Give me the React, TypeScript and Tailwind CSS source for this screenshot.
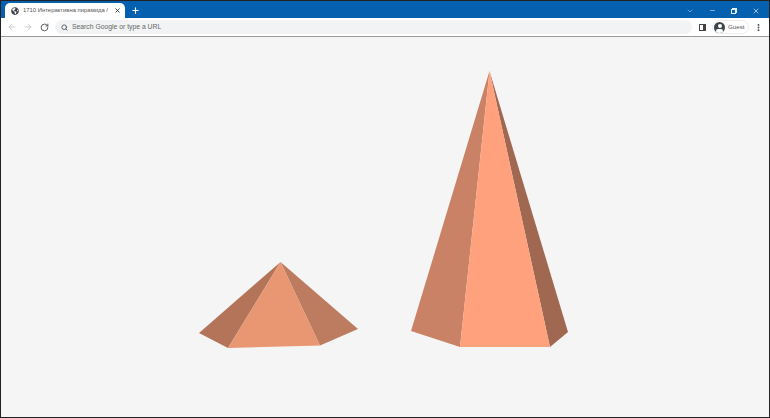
import { ArrowLeft, ArrowRight, ChevronDown, EllipsisVertical, Minus, Plus, RotateCw, Search, X } from "lucide-react";
import { FaGlobeAmericas } from "react-icons/fa";

function Pyramids() {
  return (
    <svg viewBox="0 0 768 380" className="w-full h-full block">
      <g transform="translate(-1 -37)">
        {/* left pyramid */}
        <polygon points="280.5,262 199,333 228,348" fill="#b3745a" />
        <polygon points="280.5,262 358,329 320,345.5" fill="#bd7c60" />
        <polygon points="280.5,262 228,348 320,345.5" fill="#e99672" />
        {/* right pyramid */}
        <polygon points="489.5,71 411,331 460,347" fill="#ca8266" />
        <polygon points="489.5,71 568,332 550,347" fill="#a06850" />
        <polygon points="489.5,71 460,347 550,347" fill="#ffa17c" />
      </g>
    </svg>
  );
}

function App() {
  return (
    <div className="w-[770px] h-[418px] border border-[#222] flex flex-col overflow-hidden font-['Liberation_Sans',sans-serif]">
      <div className="h-[17px] bg-[#0560b0] flex items-end pl-1 shrink-0">
        <div className="w-[120px] h-[15px] bg-white rounded-t-[5px] flex items-center pl-[6px] pr-[4px] gap-[4px]">
          <FaGlobeAmericas size={8} className="text-[#3c4043] shrink-0" />
          <span className="text-[5.9px] text-[#555] whitespace-nowrap flex-1">
            1710 Интерактивна пирамида /
          </span>
          <X size={7} className="text-[#333] shrink-0" strokeWidth={3} />
        </div>
        <div className="ml-[6px] h-[15px] flex items-center">
          <Plus size={9} className="text-white" strokeWidth={3} />
        </div>
        <div className="ml-auto h-[15px] flex items-center text-[#9cc2e6]">
          <ChevronDown size={8} className="mr-[15px]" />
          <Minus size={7} className="mr-[15px] text-[#d5e5f4]" />
          <div className="relative w-[6px] h-[6px] mr-[15px]">
            <div className="absolute top-0 right-0 w-[5px] h-[5px] border border-[#e5eff8]" />
            <div className="absolute bottom-0 left-0 w-[5px] h-[5px] border border-[#e5eff8] bg-[#0560b0]" />
          </div>
          <X size={8} className="mr-[9px] text-[#e5eff8]" />
        </div>
      </div>
      <div className="h-[19px] bg-white border-b border-[#9a9a9a] flex items-center shrink-0">
        <ArrowLeft size={10} className="ml-[6px] text-[#c4c4c4]" />
        <ArrowRight size={10} className="ml-[6px] text-[#c4c4c4]" />
        <RotateCw size={9} className="ml-[7px] text-[#555]" strokeWidth={2.5} />
        <div className="ml-[6px] w-[637px] h-[14px] rounded-full bg-[#f1f3f4] flex items-center pl-[6px] gap-[4px]">
          <Search size={7} className="text-[#555]" strokeWidth={3} />
          <span className="text-[6.8px] text-[#666]">Search Google or type a URL</span>
        </div>
        <div className="ml-[7px] w-[7px] h-[7px] border border-[#444] border-r-[3px]" />
        <div className="ml-[6px] h-[14px] w-[37px] rounded-full border border-[#ececec] flex items-center pl-[1px]">
          <div className="w-[11px] h-[11px] rounded-full bg-[#3f4448] flex flex-col items-center overflow-hidden">
            <div className="w-[4px] h-[4px] rounded-full bg-white mt-[2px]" />
            <div className="w-[7px] h-[4px] rounded-full bg-white mt-[1px]" />
          </div>
          <span className="ml-[3px] text-[6.2px] text-[#555]">Guest</span>
        </div>
        <EllipsisVertical size={9} className="ml-[5px] text-[#444]" strokeWidth={3} />
      </div>
      <div className="flex-1 bg-[#f5f5f5] min-h-0">
        <Pyramids />
      </div>
    </div>
  );
}

export default App;
